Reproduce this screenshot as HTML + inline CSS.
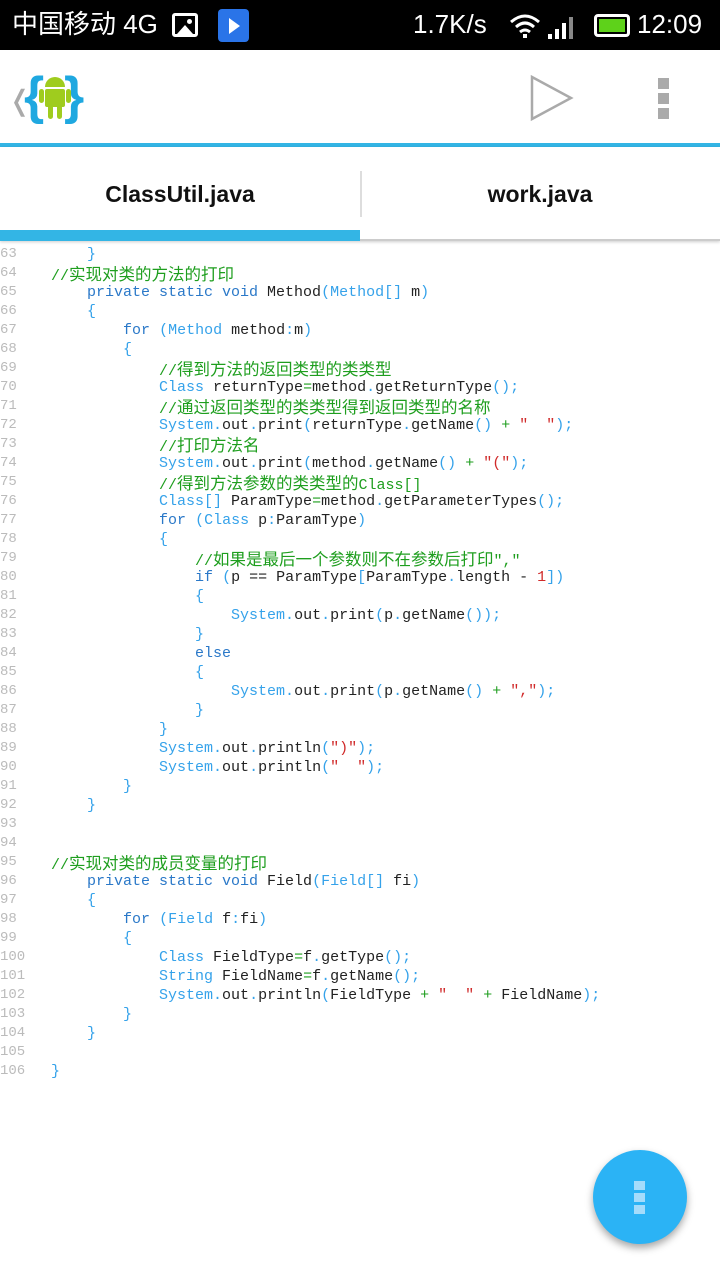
<!DOCTYPE html>
<html><head><meta charset="utf-8"><style>
*{margin:0;padding:0;box-sizing:border-box}
body{width:720px;height:1280px;overflow:hidden;background:#fff;font-family:"Liberation Sans","Noto Sans CJK SC",sans-serif;position:relative}
.sb{position:absolute;left:0;top:0;width:720px;height:50px;background:#000;color:#fff;font-size:26px}
.ab{position:absolute;top:50px;left:0;width:720px;height:93px;background:#fff}
.line{position:absolute;top:143px;left:0;width:720px;height:4px;background:#33b5e5}
.tabs{position:absolute;top:147px;left:0;width:720px;height:94px;background:#fff;border-bottom:2px solid #ccc;box-shadow:0 1px 3px rgba(0,0,0,.2)}
.tab{position:absolute;top:0;height:94px;line-height:94px;text-align:center;font-weight:bold;font-size:23px;color:#111;width:360px}
.code{position:absolute;top:245px;left:0;width:720px;font-family:"Liberation Mono","Noto Sans CJK SC",monospace;font-size:15px}
.r{height:19px;line-height:19px;position:relative;white-space:pre;color:#222}
.n{position:absolute;left:0;top:0;color:#bbb;font-size:14px}
.t{position:absolute;left:15px;top:0}
.k{color:#2a78c8}.y{color:#35a2ea}.c{color:#1e9e1e}.s{color:#d02a2a}.o{color:#1e9e1e}
.z{font-size:16.5px;line-height:19px;font-family:"Noto Sans CJK SC",sans-serif}
.fab{position:absolute;left:593px;top:1150px;width:94px;height:94px;border-radius:50%;background:#2bb3f5;box-shadow:0 4px 8px rgba(0,0,0,.35)}
.fab i{position:absolute;left:41px;width:11px;height:9px;background:#a5dcfb}
</style></head><body>
<div class="sb">
<span style="position:absolute;left:12px;top:9px;line-height:30px">中国移动 4G</span>
<div style="position:absolute;left:172px;top:13px;width:26px;height:24px;border:3px solid #fff;border-radius:3px;overflow:hidden"><div style="position:absolute;left:2px;top:9px;border-left:8px solid transparent;border-right:8px solid transparent;border-bottom:9px solid #fff"></div><div style="position:absolute;left:12px;top:3px;width:5px;height:5px;background:#fff;border-radius:50%"></div></div>
<div style="position:absolute;left:218px;top:9px;width:31px;height:33px;background:#2a74e8;border-radius:4px"><div style="position:absolute;left:11px;top:9px;border-left:11px solid #fff;border-top:8px solid transparent;border-bottom:8px solid transparent"></div></div>
<span style="position:absolute;left:413px;top:9px;line-height:30px">1.7K/s</span>
<svg style="position:absolute;left:508px;top:12px" width="72" height="28"><path d="M3 10 Q17 -2 31 10 M8 15 Q17 7 26 15 M12 20 Q17 16 22 20" stroke="#fff" stroke-width="3" fill="none"/><rect x="15" y="22" width="4" height="4" fill="#fff"/><rect x="40" y="22" width="4" height="5" fill="#fff"/><rect x="47" y="17" width="4" height="10" fill="#fff"/><rect x="54" y="11" width="4" height="16" fill="#fff"/><rect x="61" y="5" width="4" height="22" fill="#888"/></svg>
<div style="position:absolute;left:594px;top:14px;width:36px;height:23px;border:3px solid #fff;border-radius:4px;background:#000"><div style="position:absolute;left:2px;top:2px;width:26px;height:13px;background:#5ed21a"></div></div>
<span style="position:absolute;left:637px;top:9px;line-height:30px">12:09</span>
</div>
<div class="ab">
<div style="position:absolute;left:8px;top:34px;color:#aaa;font-size:28px">❬</div>
<div style="position:absolute;left:24px;top:18px;color:#1fa8e0;font-size:52px;font-weight:bold;line-height:56px">{</div>
<div style="position:absolute;left:64px;top:18px;color:#1fa8e0;font-size:52px;font-weight:bold;line-height:56px">}</div>
<svg style="position:absolute;left:37px;top:25px" width="36" height="48"><path d="M8 12 A10 10 0 0 1 28 12 Z" fill="#9fcc1e"/><rect x="8" y="14" width="20" height="18" rx="2" fill="#9fcc1e"/><rect x="2" y="14" width="5" height="14" rx="2.5" fill="#9fcc1e"/><rect x="29" y="14" width="5" height="14" rx="2.5" fill="#9fcc1e"/><rect x="11" y="30" width="5" height="14" rx="2.5" fill="#9fcc1e"/><rect x="20" y="30" width="5" height="14" rx="2.5" fill="#9fcc1e"/></svg>
<svg style="position:absolute;left:527px;top:24px" width="50" height="50"><path d="M5 3 L44 24 L5 45 Z" fill="none" stroke="#aaa" stroke-width="2.5"/></svg>
<div style="position:absolute;left:658px;top:28px;width:11px;height:11px;background:#aaa"></div>
<div style="position:absolute;left:658px;top:43px;width:11px;height:11px;background:#aaa"></div>
<div style="position:absolute;left:658px;top:58px;width:11px;height:11px;background:#aaa"></div>
</div>
<div class="line"></div>
<div class="tabs">
<div class="tab" style="left:0">ClassUtil.java</div>
<div class="tab" style="left:360px">work.java</div>
<div style="position:absolute;left:360px;top:24px;width:2px;height:46px;background:#ddd"></div>
<div style="position:absolute;left:0;top:83px;width:360px;height:11px;background:#33b5e5"></div>
</div>
<div class="code">
<div class="r"><span class="n">63</span><span class="t">        <span class="y">}</span></span></div>
<div class="r"><span class="n">64</span><span class="t">    <span class="c">//<span class="z">实现对类的方法的打印</span></span></span></div>
<div class="r"><span class="n">65</span><span class="t">        <span class="k">private static void</span> Method<span class="y">(Method[]</span> m<span class="y">)</span></span></div>
<div class="r"><span class="n">66</span><span class="t">        <span class="y">{</span></span></div>
<div class="r"><span class="n">67</span><span class="t">            <span class="k">for</span> <span class="y">(Method</span> method<span class="y">:</span>m<span class="y">)</span></span></div>
<div class="r"><span class="n">68</span><span class="t">            <span class="y">{</span></span></div>
<div class="r"><span class="n">69</span><span class="t">                <span class="c">//<span class="z">得到方法的返回类型的类类型</span></span></span></div>
<div class="r"><span class="n">70</span><span class="t">                <span class="y">Class</span> returnType<span class="o">=</span>method<span class="y">.</span>getReturnType<span class="y">();</span></span></div>
<div class="r"><span class="n">71</span><span class="t">                <span class="c">//<span class="z">通过返回类型的类类型得到返回类型的名称</span></span></span></div>
<div class="r"><span class="n">72</span><span class="t">                <span class="y">System.</span>out<span class="y">.</span>print<span class="y">(</span>returnType<span class="y">.</span>getName<span class="y">()</span> <span class="o">+</span> <span class="s">"  "</span><span class="y">);</span></span></div>
<div class="r"><span class="n">73</span><span class="t">                <span class="c">//<span class="z">打印方法名</span></span></span></div>
<div class="r"><span class="n">74</span><span class="t">                <span class="y">System.</span>out<span class="y">.</span>print<span class="y">(</span>method<span class="y">.</span>getName<span class="y">()</span> <span class="o">+</span> <span class="s">"("</span><span class="y">);</span></span></div>
<div class="r"><span class="n">75</span><span class="t">                <span class="c">//<span class="z">得到方法参数的类类型的</span>Class[]</span></span></div>
<div class="r"><span class="n">76</span><span class="t">                <span class="y">Class[]</span> ParamType<span class="o">=</span>method<span class="y">.</span>getParameterTypes<span class="y">();</span></span></div>
<div class="r"><span class="n">77</span><span class="t">                <span class="k">for</span> <span class="y">(Class</span> p<span class="y">:</span>ParamType<span class="y">)</span></span></div>
<div class="r"><span class="n">78</span><span class="t">                <span class="y">{</span></span></div>
<div class="r"><span class="n">79</span><span class="t">                    <span class="c">//<span class="z">如果是最后一个参数则不在参数后打印</span>","</span></span></div>
<div class="r"><span class="n">80</span><span class="t">                    <span class="k">if</span> <span class="y">(</span>p == ParamType<span class="y">[</span>ParamType<span class="y">.</span>length - <span class="s">1</span><span class="y">])</span></span></div>
<div class="r"><span class="n">81</span><span class="t">                    <span class="y">{</span></span></div>
<div class="r"><span class="n">82</span><span class="t">                        <span class="y">System.</span>out<span class="y">.</span>print<span class="y">(</span>p<span class="y">.</span>getName<span class="y">());</span></span></div>
<div class="r"><span class="n">83</span><span class="t">                    <span class="y">}</span></span></div>
<div class="r"><span class="n">84</span><span class="t">                    <span class="k">else</span></span></div>
<div class="r"><span class="n">85</span><span class="t">                    <span class="y">{</span></span></div>
<div class="r"><span class="n">86</span><span class="t">                        <span class="y">System.</span>out<span class="y">.</span>print<span class="y">(</span>p<span class="y">.</span>getName<span class="y">()</span> <span class="o">+</span> <span class="s">","</span><span class="y">);</span></span></div>
<div class="r"><span class="n">87</span><span class="t">                    <span class="y">}</span></span></div>
<div class="r"><span class="n">88</span><span class="t">                <span class="y">}</span></span></div>
<div class="r"><span class="n">89</span><span class="t">                <span class="y">System.</span>out<span class="y">.</span>println<span class="y">(</span><span class="s">")"</span><span class="y">);</span></span></div>
<div class="r"><span class="n">90</span><span class="t">                <span class="y">System.</span>out<span class="y">.</span>println<span class="y">(</span><span class="s">"  "</span><span class="y">);</span></span></div>
<div class="r"><span class="n">91</span><span class="t">            <span class="y">}</span></span></div>
<div class="r"><span class="n">92</span><span class="t">        <span class="y">}</span></span></div>
<div class="r"><span class="n">93</span></div>
<div class="r"><span class="n">94</span></div>
<div class="r"><span class="n">95</span><span class="t">    <span class="c">//<span class="z">实现对类的成员变量的打印</span></span></span></div>
<div class="r"><span class="n">96</span><span class="t">        <span class="k">private static void</span> Field<span class="y">(Field[]</span> fi<span class="y">)</span></span></div>
<div class="r"><span class="n">97</span><span class="t">        <span class="y">{</span></span></div>
<div class="r"><span class="n">98</span><span class="t">            <span class="k">for</span> <span class="y">(Field</span> f<span class="y">:</span>fi<span class="y">)</span></span></div>
<div class="r"><span class="n">99</span><span class="t">            <span class="y">{</span></span></div>
<div class="r"><span class="n">100</span><span class="t">                <span class="y">Class</span> FieldType<span class="o">=</span>f<span class="y">.</span>getType<span class="y">();</span></span></div>
<div class="r"><span class="n">101</span><span class="t">                <span class="y">String</span> FieldName<span class="o">=</span>f<span class="y">.</span>getName<span class="y">();</span></span></div>
<div class="r"><span class="n">102</span><span class="t">                <span class="y">System.</span>out<span class="y">.</span>println<span class="y">(</span>FieldType <span class="o">+</span> <span class="s">"  "</span> <span class="o">+</span> FieldName<span class="y">);</span></span></div>
<div class="r"><span class="n">103</span><span class="t">            <span class="y">}</span></span></div>
<div class="r"><span class="n">104</span><span class="t">        <span class="y">}</span></span></div>
<div class="r"><span class="n">105</span></div>
<div class="r"><span class="n">106</span><span class="t">    <span class="y">}</span></span></div>
</div>
<div class="fab"><i style="top:31px"></i><i style="top:43px"></i><i style="top:55px"></i></div>
</body></html>
